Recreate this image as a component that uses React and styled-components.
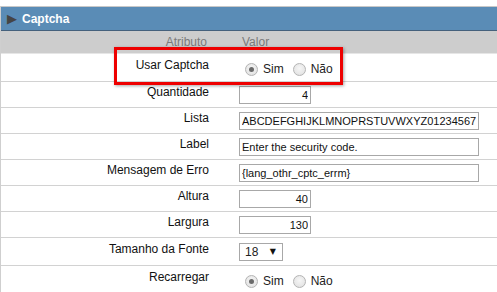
import styled, { createGlobalStyle } from "styled-components";

const GlobalStyle = createGlobalStyle`
  body {
    margin: 0;
    background: #ffffff;
    font-family: "Liberation Sans", Arial, sans-serif;
  }
`

const rows = [
  { label: "Usar Captcha", type: "radio", value: "sim", tall: true },
  { label: "Quantidade", type: "number", value: "4" },
  { label: "Lista", type: "text", value: "ABCDEFGHIJKLMNOPRSTUVWXYZ0123456789" },
  { label: "Label", type: "text", value: "Enter the security code." },
  { label: "Mensagem de Erro", type: "text", value: "{lang_othr_cptc_errm}" },
  { label: "Altura", type: "number", value: "40" },
  { label: "Largura", type: "number", value: "130" },
  { label: "Tamanho da Fonte", type: "select", value: "18", tall: true },
  { label: "Recarregar", type: "radio", value: "sim", tall: true },
]

const RadioGroup = ({ name, value }) => (
  <Radios>
    <RadioLabel>
      <Radio type="radio" name={name} defaultChecked={value === "sim"} />
      Sim
    </RadioLabel>
    <RadioLabel>
      <Radio type="radio" name={name} defaultChecked={value === "nao"} />
      Não
    </RadioLabel>
  </Radios>
)

const Field = ({ row, index }) => {
  if (row.type === "radio") return <RadioGroup name={"r" + index} value={row.value} />
  if (row.type === "select") {
    return (
      <SelectBox>
        <span>{row.value}</span>
        <Arrow>▼</Arrow>
      </SelectBox>
    )
  }
  return <Input $number={row.type === "number"} defaultValue={row.value} readOnly />
}

const App = () => {
  return (
    <Page>
      <GlobalStyle />
      <Panel>
        <Title>
          <Triangle>▶</Triangle>
          Captcha
        </Title>
        <HeadRow>
          <HeadCell>Atributo</HeadCell>
          <HeadValue>Valor</HeadValue>
        </HeadRow>
        {rows.map((row, i) => (
          <Row key={row.label} $tall={row.tall}>
            <Label $tall={row.tall}>{row.label}</Label>
            <Value>
              <Field row={row} index={i} />
            </Value>
          </Row>
        ))}
      </Panel>
      <Highlight />
    </Page>
  )
}

export default App

const Page = styled.div`
  position: relative;
  width: 497px;
  height: 292px;
  overflow: hidden;
  padding-top: 6px;
  box-sizing: border-box;
`

const Panel = styled.div`
  border-top: 1px solid #c8c8c8;
  border-left: 1px solid #cfcfcf;
  width: 520px;
`

const Title = styled.div`
  height: 23px;
  background: #5a8cb6;
  border-bottom: 1px solid #45617c;
  color: #ffffff;
  font-weight: bold;
  font-size: 12px;
  display: flex;
  align-items: center;
  padding-left: 6px;
`

const Triangle = styled.span`
  color: #454545;
  font-size: 13px;
  margin-right: 5px;
  font-family: "DejaVu Sans", sans-serif;
`

const HeadRow = styled.div`
  display: grid;
  grid-template-columns: 230px 1fr;
  height: 22px;
  align-items: center;
  background: #cdcdcd;
  border-bottom: 1px solid #e6e6e6;
  color: #7a7a7a;
  font-size: 12px;
`

const HeadCell = styled.div`
  text-align: right;
  padding-right: 24px;
`

const HeadValue = styled.div`
  padding-left: 11px;
`

const Row = styled.div`
  display: grid;
  grid-template-columns: 230px 1fr;
  height: ${p => (p.$tall ? 27 : 25)}px;
  border-bottom: 1px solid #d2d2d2;
  font-size: 12px;
  color: #111111;
`

const Label = styled.div`
  text-align: right;
  padding-right: 22px;
  padding-top: ${p => (p.$tall ? 4 : 3)}px;
  line-height: 14px;
`

const Value = styled.div`
  display: flex;
  align-items: center;
  padding-left: 8px;
`

const Input = styled.input`
  box-sizing: border-box;
  width: ${p => (p.$number ? 72 : 240)}px;
  height: 18px;
  border: 1px solid #a8a8a8;
  padding: 0 2px;
  font-family: "Liberation Sans", Arial, sans-serif;
  font-size: 11px;
  color: #111111;
  text-align: ${p => (p.$number ? "right" : "left")};
  outline: none;
`

const SelectBox = styled.div`
  box-sizing: border-box;
  width: 44px;
  height: 18px;
  border: 1px solid #a8a8a8;
  display: flex;
  align-items: center;
  justify-content: space-between;
  padding: 0 6px 0 5px;
  font-size: 12px;
  color: #222222;
`

const Arrow = styled.span`
  font-size: 8px;
  color: #111111;
  font-family: "DejaVu Sans", sans-serif;
`

const Radios = styled.div`
  display: flex;
  gap: 9px;
  padding-left: 6px;
  margin-top: 3px;
`

const RadioLabel = styled.label`
  display: flex;
  align-items: center;
  gap: 5px;
  font-size: 12px;
  color: #222222;
`

const Radio = styled.input`
  appearance: none;
  margin: 0;
  width: 13px;
  height: 13px;
  border-radius: 50%;
  border: 1px solid #b4b4b4;
  background: radial-gradient(circle at 50% 40%, #f6f6f6 0%, #dedede 100%);
  box-sizing: border-box;
  position: relative;

  &:checked::after {
    content: "";
    position: absolute;
    left: 3px;
    top: 3px;
    width: 5px;
    height: 5px;
    border-radius: 50%;
    background: #6a6a6a;
  }
`

const Highlight = styled.div`
  position: absolute;
  left: 114px;
  top: 47px;
  width: 229px;
  height: 38px;
  box-sizing: border-box;
  border: 3px solid #ee0000;
  box-shadow: 1px 1px 3px rgba(0, 0, 0, 0.35);
  pointer-events: none;
`
